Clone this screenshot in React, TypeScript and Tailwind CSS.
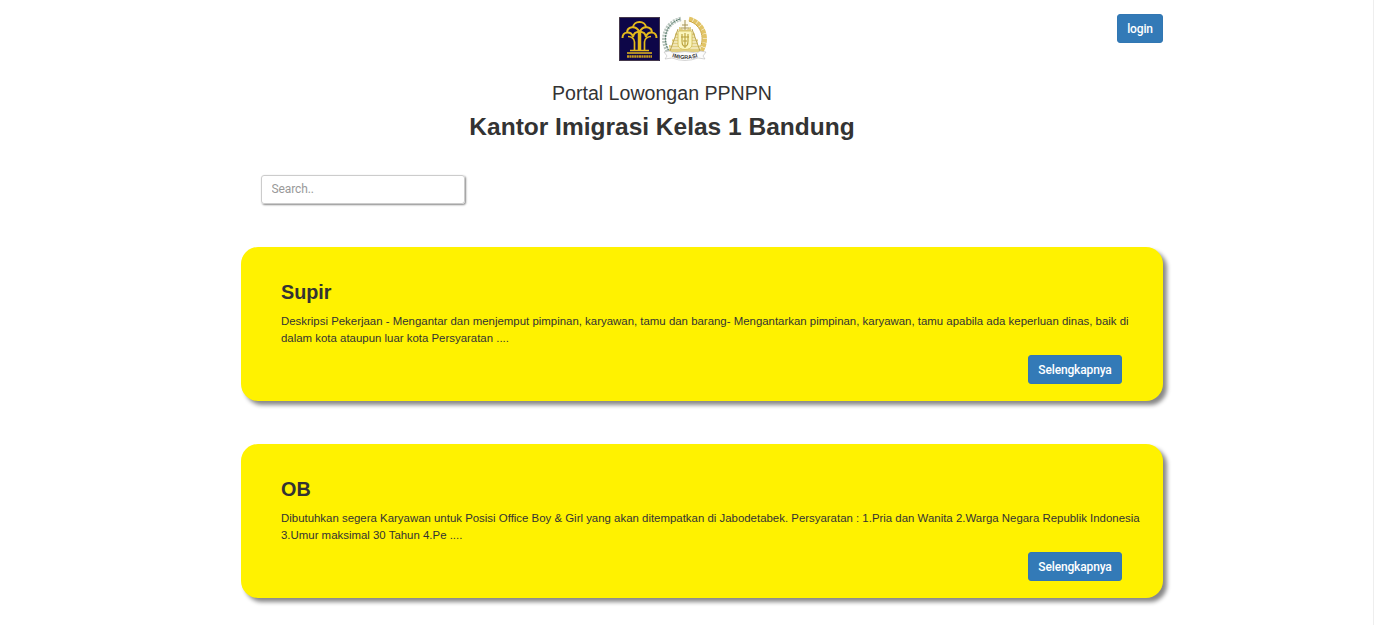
const jobs = [
  {
    title: "Supir",
    lines: [
      "Deskripsi Pekerjaan - Mengantar dan menjemput pimpinan, karyawan, tamu dan barang- Mengantarkan pimpinan, karyawan, tamu apabila ada keperluan dinas, baik di",
      "dalam kota ataupun luar kota Persyaratan ....",
    ],
  },
  {
    title: "OB",
    lines: [
      "Dibutuhkan segera Karyawan untuk Posisi Office Boy & Girl yang akan ditempatkan di Jabodetabek. Persyaratan : 1.Pria dan Wanita 2.Warga Negara Republik Indonesia",
      "3.Umur maksimal 30 Tahun 4.Pe ....",
    ],
  },
];

function MinistryLogo() {
  return (
    <svg width="41" height="44" viewBox="0 0 41 44" className="block">
      <rect width="41" height="44" fill="#0d0648" />
      <rect x=".5" y=".5" width="40" height="43" fill="none" stroke="#6a5a50" strokeWidth=".6" />
      <g fill="none" stroke="#e3b91c" strokeWidth="2">
        <path d="M14 11c0-8 13-8 13 0" />
        <path d="M8 16c0-7 9-8 12.500-1 3.500-7 12.500-6 12.500 1" />
        <path d="M3.500 21c0-7 9-7 10.500-1 1-7 12-7 13 0 1.500-6 10.500-6 10.500 1" />
        <path d="M9 19.500c3 0 6.500 2 6.500 5.500v9M32 19.500c-3 0-6.500 2-6.500 5.500v9" strokeWidth="1.700" />
        <path d="M20.500 34V14" strokeWidth="3.500" />
        <path d="M11 33.500h19M8 36h25" strokeWidth="1.700" />
      </g>
      <path d="M8 39.500h25" stroke="#c59a20" strokeWidth="2.600" strokeDasharray="2 .4" />
    </svg>
  );
}

function ImmigrationLogo() {
  return (
    <svg width="46" height="47" viewBox="0 0 46 47" className="block">
      <g fill="none">
        <path d="M19 3C4 6-3 23 7 37" stroke="#b9c6be" strokeWidth="4.500" strokeDasharray="2 1" />
        <path d="M18 3C3 8 0 24 7 35" stroke="#54796a" strokeWidth="1" strokeDasharray="2 .8" />
        <path d="M27 3C41 6 48 23 38 37" stroke="#e2c466" strokeWidth="4.500" strokeDasharray="4 .5" />
        <path d="M27 5C40 9 44 24 36 35" stroke="#cba53a" strokeWidth="1" />
      </g>
      <path d="M17 11h12v6h4v6h3v6h3v7H7v-7h3v-6h3v-6h4z" fill="#e0cf82" />
      <path d="M13 17h20M12 20h22M10 23h26M9 26h28M8 29h30M7 32h32" stroke="#fffbe5" strokeWidth="1.200" />
      <path d="M16 13L8 35M30 13l8 22" stroke="#bba551" strokeWidth="1" />
      <circle cx="23" cy="9" r="5" fill="#fdfbec" />
      <path d="M23 4v10M20 9h6M19 12h8" stroke="#a59250" strokeWidth="1" />
      <path d="M16 15h14v14c0 6-14 6-14 0z" fill="#fbf6bd" stroke="#d0ba50" strokeWidth=".8" />
      <path d="M20 18v7c0 7 6 7 6 0v-7M23 17v15M19 21h8M21 25h4" fill="none" stroke="#b8a03a" strokeWidth="1.100" />
      <path d="M2 36l6-1 3 2q12-3 24 0l3-2 6 1-3 4 2 3-7-1q-13 5-26 0l-7 1 2-3z" fill="#fcfcfc" stroke="#bbb" strokeWidth=".6" />
      <path id="ribbon" d="M10 41q13 4 26 0" fill="none" />
      <text fontFamily="Liberation Sans" fontSize="5.500" fontWeight="700" fill="#333">
        <textPath href="#ribbon" textLength="26">IMIGRASI</textPath>
      </text>
    </svg>
  );
}

const buttonClass =
  "flex h-[29px] items-center justify-center rounded-[3px] border border-[#3277b3] bg-[#337ab7] font-[Roboto,sans-serif] text-[12px] font-medium tracking-[-0.15px] text-white";

export default function App() {
  return (
    <div className="h-[625px] overflow-hidden border-r border-[#eeeeee] bg-white pl-[241px] pr-[210px] font-['Liberation_Sans',Arial,sans-serif] text-[#333333]">
      <header className="flex h-[175px] justify-between pt-[14px]">
        <div className="ml-[179px] flex w-[484px] flex-col items-center">
          <div className="ml-[2px] flex h-[50px] gap-[2px] pt-[2px]">
            <div className="pt-px"><MinistryLogo /></div>
            <ImmigrationLogo />
          </div>
          <p className="mt-[17px] h-6 text-[19.600px] leading-6">Portal Lowongan PPNPN</p>
          <h1 className="mt-[6px] text-[24.500px] font-bold leading-[31px]">Kantor Imigrasi Kelas 1 Bandung</h1>
        </div>
        <button className={`${buttonClass} w-[46px]`}>login</button>
      </header>
      <input
        placeholder="Search.."
        className="ml-5 block h-[29px] w-[204px] rounded-[3px] border border-[#cccccc] px-[9.500px] pb-px font-[Roboto,sans-serif] text-[12px] tracking-[-0.1px] shadow-[1px_1px_2px_#888888] outline-none placeholder:text-[#999999]"
      />
      <main className="mt-[43px] flex flex-col gap-[43px]">
        {jobs.map((job) => (
          <section key={job.title} className="h-[154px] w-[922px] rounded-[17px] bg-[#fff200] pl-10 pr-[41px] pt-8 shadow-[4px_4px_4px_#888888]">
            <h2 className="text-[19.800px] font-bold leading-[26px]">{job.title}</h2>
            <p className="mt-[8px] whitespace-nowrap text-[11.430px] leading-[17px]">
              {job.lines.map((line) => <span key={line} className="block">{line}</span>)}
            </p>
            <div className="mt-[8px] flex justify-end">
              <button className={`${buttonClass} w-[94px]`}>Selengkapnya</button>
            </div>
          </section>
        ))}
      </main>
    </div>
  );
}
